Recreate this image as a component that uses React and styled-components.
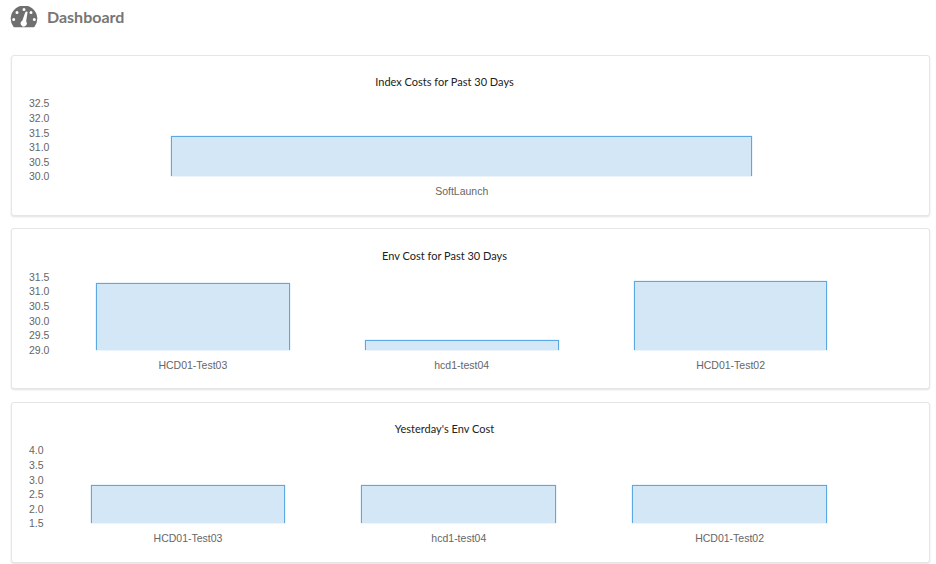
import React from 'react';
import styled, { createGlobalStyle } from 'styled-components';

const PLOT_HEIGHT = 73;

const charts = [
  {
    title: 'Index Costs for Past 30 Days',
    ticks: [30.0, 30.5, 31.0, 31.5, 32.0, 32.5],
    bars: [{ label: 'SoftLaunch', value: 31.37 }],
  },
  {
    title: 'Env Cost for Past 30 Days',
    ticks: [29.0, 29.5, 30.0, 30.5, 31.0, 31.5],
    bars: [
      { label: 'HCD01-Test03', value: 31.3 },
      { label: 'hcd1-test04', value: 29.33 },
      { label: 'HCD01-Test02', value: 31.37 },
    ],
  },
  {
    title: "Yesterday's Env Cost",
    ticks: [1.5, 2.0, 2.5, 3.0, 3.5, 4.0],
    bars: [
      { label: 'HCD01-Test03', value: 2.83 },
      { label: 'hcd1-test04', value: 2.83 },
      { label: 'HCD01-Test02', value: 2.83 },
    ],
  },
];

function GaugeIcon() {
  return (
    <svg width="28" height="22" viewBox="0 0 28 22">
      <path
        fill="#6f6f6f"
        fillRule="evenodd"
        d="M3.600 21 A13.300 13.300 0 1 1 24.400 21 Q24.100 21.300 23.600 21.300 H4.400 Q3.900 21.300 3.600 21 Z
           M14 2.100 a1.500 1.500 0 1 0 0 3 a1.500 1.500 0 1 0 0 -3 Z
           M7 4.900 a1.500 1.500 0 1 0 0 3 a1.500 1.500 0 1 0 0 -3 Z
           M21 4.900 a1.500 1.500 0 1 0 0 3 a1.500 1.500 0 1 0 0 -3 Z
           M3.700 12 a1.500 1.500 0 1 0 0 3 a1.500 1.500 0 1 0 0 -3 Z
           M24.300 12 a1.500 1.500 0 1 0 0 3 a1.500 1.500 0 1 0 0 -3 Z
           M16.600 5.400 C17.200 5.400 17.600 5.900 17.500 6.500 L16.100 15.600 A3 3 0 1 1 12.300 14.800 L15.300 6.300 C15.500 5.700 16 5.400 16.600 5.400 Z"
      />
    </svg>
  );
}

function Chart({ title, ticks, bars }) {
  const min = ticks[0];
  const max = ticks[ticks.length - 1];
  const labels = [...ticks].reverse();

  return (
    <Card>
      <ChartTitle>{title}</ChartTitle>
      <ChartBody>
        <Axis>
          {labels.map(t => (
            <Tick key={t}>{t.toFixed(1)}</Tick>
          ))}
        </Axis>
        <Plot>
          {bars.map((b, i) => (
            <Category key={i}>
              <BarSlot>
                <Bar style={{ height: ((b.value - min) / (max - min)) * PLOT_HEIGHT }} />
              </BarSlot>
              <BarLabel>{b.label}</BarLabel>
            </Category>
          ))}
        </Plot>
      </ChartBody>
    </Card>
  );
}

export default function App() {
  return (
    <>
      <GlobalStyle />
      <Page>
        <Header>
          <GaugeIcon />
          <Heading>Dashboard</Heading>
        </Header>
        <Stack>
          {charts.map(c => (
            <Chart key={c.title} {...c} />
          ))}
        </Stack>
      </Page>
    </>
  );
}

/* ========== styled-components ========== */

const GlobalStyle = createGlobalStyle`
  html, body { margin: 0; padding: 0; background: #fff; overflow: hidden; }
  * { box-sizing: border-box; }
`;

const Page = styled.div`
  width: 936px; height: 564px;
  padding: 5px 6px 0 10px;
  overflow: hidden;
`;

const Header = styled.div`
  display: flex; align-items: center; gap: 9px;
  height: 24px;
  margin-bottom: 25.9px;
`;

const Heading = styled.h1`
  margin: 0;
  font: 700 16px/24px Lato, sans-serif;
  color: #767676;
`;

const Stack = styled.div`
  display: flex; flex-direction: column; gap: 12.5px;
  padding-left: 1px;
`;

const Card = styled.div`
  width: 919px; height: 161px;
  padding: 20.5px 65px 0 17px;
  background: #fff;
  border: 1px solid #e6e6e6;
  border-radius: 3px;
  box-shadow: 0 1px 2px rgba(0, 0, 0, 0.12);
`;

const ChartTitle = styled.div`
  height: 12px;
  padding-right: 4px;
  text-align: center;
  font: 400 11px/12px Lato, sans-serif;
  color: #222;
`;

const ChartBody = styled.div`
  display: flex; gap: 9px;
  margin-top: 8px;
  margin-right: -1px;
`;

const Axis = styled.div`
  display: flex; flex-direction: column;
`;

const Tick = styled.div`
  height: 14.6px;
  font: 400 10.5px/14.6px "Liberation Sans", sans-serif;
  color: #666;
`;

const Plot = styled.div`
  flex: 1;
  display: flex;
  padding-top: 7px;
`;

const Category = styled.div`
  flex: 1;
  display: flex; flex-direction: column; align-items: center;
`;

const BarSlot = styled.div`
  width: 72%; height: 73px;
  display: flex; align-items: flex-end;
`;

const Bar = styled.div`
  width: 100%;
  background: #d4e7f6;
  border: 1px solid #5ba8e2;
  border-bottom: none;
  box-shadow: 0 0 1px rgba(91, 168, 226, 0.7);
`;

const BarLabel = styled.div`
  margin-top: 8px;
  font: 400 10.5px/14px "Liberation Sans", sans-serif;
  color: #666;
`;
